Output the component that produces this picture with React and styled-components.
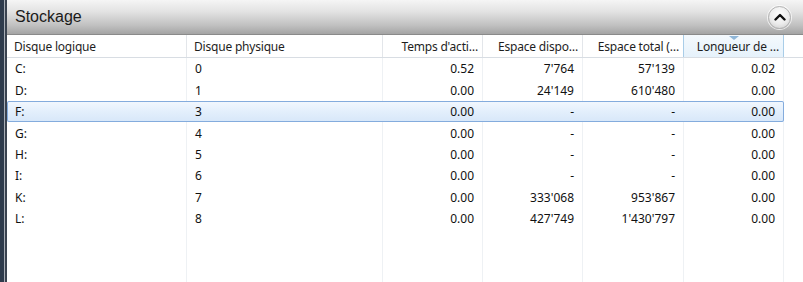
import styled, { createGlobalStyle } from 'styled-components'

const GlobalStyle = createGlobalStyle`
  html, body {
    margin: 0;
    padding: 0;
    height: 100%;
    background: #ffffff;
  }
  #root {
    height: 100%;
  }
`

const columns = [
  { label: 'Disque logique', width: 180, align: 'left' },
  { label: 'Disque physique', width: 196, align: 'left' },
  { label: "Temps d'acti…", width: 100, align: 'right' },
  { label: 'Espace dispo…', width: 100, align: 'right' },
  { label: 'Espace total (…', width: 101, align: 'right' },
  { label: 'Longueur de …', width: 100, align: 'right', sorted: true }
]

const rows = [
  ['C:', '0', '0.52', "7'764", "57'139", '0.02'],
  ['D:', '1', '0.00', "24'149", "610'480", '0.00'],
  ['F:', '3', '0.00', '-', '-', '0.00'],
  ['G:', '4', '0.00', '-', '-', '0.00'],
  ['H:', '5', '0.00', '-', '-', '0.00'],
  ['I:', '6', '0.00', '-', '-', '0.00'],
  ['K:', '7', '0.00', "333'068", "953'867", '0.00'],
  ['L:', '8', '0.00', "427'749", "1'430'797", '0.00']
]

const template = columns.map((c) => `${c.width}px`).join(' ')

export default function App () {
  return (
    <>
      <GlobalStyle />
      <Screen>
        <WindowEdge />
        <Panel>
          <TitleBar>
            <Title>Stockage</Title>
            <CollapseButton aria-label='Réduire'>
              <svg width='12' height='8' viewBox='0 0 12 8'>
                <path d='M1.5 6.5 L6 2 L10.5 6.5' fill='none' stroke='#111' strokeWidth='2.4' strokeLinecap='round' strokeLinejoin='round' />
              </svg>
            </CollapseButton>
          </TitleBar>

          <HeaderRow>
            <Cells $template={template}>
              {columns.map((c) => (
                <HeaderCell key={c.label} $align={c.align} $sorted={c.sorted}>
                  {c.sorted && <SortArrow />}
                  {c.label}
                </HeaderCell>
              ))}
            </Cells>
            <Tail />
          </HeaderRow>

          <Body>
            {rows.map((r, i) => {
              const selected = r[0] === 'F:'
              return (
                <Row key={i}>
                  <Cells $template={template} $selected={selected}>
                    {r.map((v, j) => (
                      <Cell key={j} $align={columns[j].align} $selected={selected}>{v}</Cell>
                    ))}
                  </Cells>
                  <Tail />
                </Row>
              )
            })}
            <FillerRow>
              <Cells $template={template}>
                {columns.map((c) => <Cell key={c.label} />)}
              </Cells>
              <Tail />
            </FillerRow>
          </Body>
        </Panel>
      </Screen>
    </>
  )
}

const Screen = styled.div`
  display: flex;
  height: 100%;
  overflow: hidden;
`

const WindowEdge = styled.div`
  width: 7px;
  flex: none;
  background: linear-gradient(to right, #2e3b4c 0 4px, #a7adb5 4px 5px, #3a4350 5px 7px);
`

const Panel = styled.div`
  flex: 1;
  display: flex;
  flex-direction: column;
  min-width: 0;
`

const TitleBar = styled.div`
  height: 35px;
  flex: none;
  box-sizing: border-box;
  display: flex;
  align-items: center;
  justify-content: space-between;
  padding: 0 12px 1px 8px;
  background: linear-gradient(to bottom, #f5f5f5 0%, #e2e2e2 35%, #c0c0c0 75%, #a4a4a4 100%);
  border-bottom: 1px solid #8a8a8a;
`

const Title = styled.div`
  font-family: "Liberation Sans", Arial, sans-serif;
  font-size: 16px;
  color: #1b1b1b;
`

const CollapseButton = styled.button`
  width: 23px;
  height: 23px;
  padding: 0;
  margin-top: 1px;
  border-radius: 50%;
  border: 1px solid #b4b4b4;
  background: radial-gradient(circle at 50% 35%, #ffffff 0%, #ececec 55%, #c9c9c9 100%);
  box-shadow: 0 0 0 1px rgba(255, 255, 255, 0.7);
  display: flex;
  align-items: center;
  justify-content: center;
`

const HeaderRow = styled.div`
  display: flex;
  height: 23px;
  flex: none;
  box-sizing: border-box;
  border-bottom: 1px solid #d8dde3;
  background: #ffffff;
`

const Cells = styled.div`
  flex: none;
  display: grid;
  grid-template-columns: ${(p) => p.$template};
  border-radius: 2px;
  background: ${(p) => (p.$selected ? 'linear-gradient(to bottom, #f3f8fe 0%, #e3effc 50%, #d7e7f9 100%)' : 'transparent')};
  box-shadow: ${(p) => (p.$selected ? 'inset 0 0 0 1px #84acdd' : 'none')};
`

const HeaderCell = styled.div`
  position: relative;
  font-family: "Noto Sans", "Open Sans", sans-serif;
  font-size: 12px;
  letter-spacing: -0.2px;
  color: #1e1e1e;
  display: flex;
  align-items: center;
  justify-content: ${(p) => (p.$align === 'right' ? 'flex-end' : 'flex-start')};
  padding: 0 4px 0 7px;
  white-space: nowrap;
  overflow: hidden;
  border-right: 1px solid ${(p) => (p.$sorted ? '#a9cde8' : '#e3e6ea')};
  box-shadow: ${(p) => (p.$sorted ? '-1px 0 0 #a9cde8' : 'none')};
  background: ${(p) => (p.$sorted ? 'linear-gradient(to bottom, #f4f9fd, #e6f2fb)' : 'transparent')};
`

const SortArrow = styled.span`
  position: absolute;
  top: 1px;
  left: 50%;
  margin-left: -5px;
  width: 0;
  height: 0;
  border-left: 5px solid transparent;
  border-right: 5px solid transparent;
  border-top: 4px solid #8fb6d8;
`

const Body = styled.div`
  flex: 1;
  display: flex;
  flex-direction: column;
`

const Row = styled.div`
  display: flex;
  height: 21.45px;
  flex: none;
`

const Cell = styled.div`
  font-family: "Noto Sans", "Open Sans", sans-serif;
  font-size: 12px;
  color: #111;
  display: flex;
  align-items: center;
  justify-content: ${(p) => (p.$align === 'right' ? 'flex-end' : 'flex-start')};
  padding: ${(p) => (p.$align === 'right' ? '0 8px 0 7px' : '0 7px 0 8px')};
  white-space: nowrap;
  border-right: 1px solid ${(p) => (p.$selected ? 'transparent' : '#eef1f4')};
`

const Tail = styled.div`
  flex: 1;
`

const FillerRow = styled.div`
  flex: 1;
  display: flex;
`
